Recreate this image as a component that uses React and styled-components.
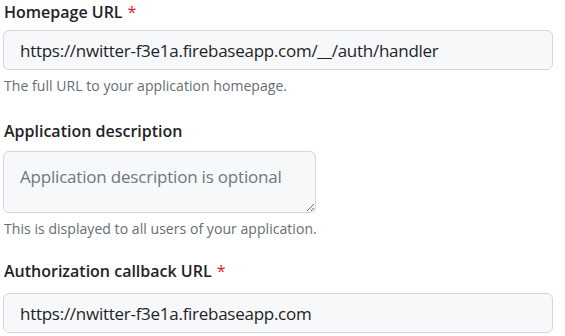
import React from "react";
import styled, { createGlobalStyle } from "styled-components";

const Global = createGlobalStyle`
  html, body { margin: 0; padding: 0; background: #ffffff; }
  body { font-family: "Open Sans", "Noto Sans", sans-serif; color: #1f2328; }
`;

const Form = styled.div`
  display: flex;
  flex-direction: column;
  padding: 0 12px 0 3px;
  width: 550px;
`;

const Field = styled.div`
  display: flex;
  flex-direction: column;
  margin-bottom: ${(p) => p.$gap || 0}px;
`;

const Label = styled.label`
  font-size: 16px;
  font-weight: 600;
  line-height: 24px;
  padding-left: 1px;
  margin-bottom: ${(p) => p.$mb || 7}px;
  letter-spacing: 0;
`;

const Required = styled.span`
  color: #cf222e;
  margin-left: 5px;
  font-weight: 400;
`;

const Input = styled.input`
  box-sizing: border-box;
  width: 550px;
  height: 40px;
  padding: 0 16px;
  font-family: inherit;
  font-size: 17px;
  letter-spacing: -0.27px;
  color: #1f2328;
  background: #f6f8fa;
  border: 1px solid #d0d7de;
  border-radius: 6px;
  outline: none;
`;

const TextArea = styled.textarea`
  box-sizing: border-box;
  width: 313px;
  height: 62px;
  padding: 13px 16px 0;
  font-family: inherit;
  font-size: 17px;
  letter-spacing: -0.2px;
  line-height: 24px;
  color: #1f2328;
  background: #f6f8fa;
  border: 1px solid #d0d7de;
  border-radius: 6px;
  outline: none;
  resize: vertical;
  display: block;
  &::placeholder { color: #6e7781; opacity: 1; }
`;

const Note = styled.p`
  margin: 6px 0 0 1px;
  font-size: 14px;
  line-height: 20px;
  color: #656d76;
  letter-spacing: 0.05px;
`;

export default function App() {
  return (
    <>
      <Global />
      <Form>
        <Field $gap={23}>
          <Label $mb={6}>
            Homepage URL<Required>*</Required>
          </Label>
          <Input readOnly value="https://nwitter-f3e1a.firebaseapp.com/__/auth/handler" />
          <Note>The full URL to your application homepage.</Note>
        </Field>
        <Field $gap={20}>
          <Label $mb={8}>Application description</Label>
          <TextArea placeholder="Application description is optional" />
          <Note>This is displayed to all users of your application.</Note>
        </Field>
        <Field>
          <Label $mb={10}>
            Authorization callback URL<Required>*</Required>
          </Label>
          <Input readOnly value="https://nwitter-f3e1a.firebaseapp.com" />
        </Field>
      </Form>
    </>
  );
}
